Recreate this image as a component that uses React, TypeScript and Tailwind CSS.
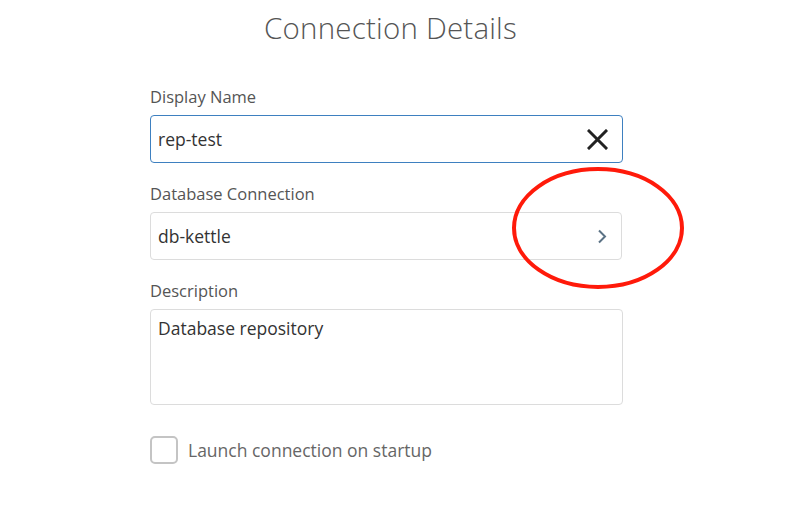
import React, {useState} from "react";

const font = {fontFamily: '"Open Sans", "Noto Sans", sans-serif'};

const App = () => {
    const [name, setName] = useState("rep-test");
    const [launch, setLaunch] = useState(false);

    return (
        <div className="w-[809px] h-[509px] bg-white relative overflow-hidden" style={font}>
            <div className="ml-[150px] w-[473px] pt-[10px] flex flex-col">
                <h1 className="text-center pl-[8px] text-[29.5px] font-light text-[#555] leading-[36px] tracking-[0.2px]">
                    Connection Details
                </h1>

                <label className="mt-[40px] text-[16.5px] text-[#555] leading-[22px]">Display Name</label>
                <div className="mt-[7px] h-[48px] rounded-[4px] border border-[#3e80c0] flex items-center pl-[7px] pr-[13px]">
                    <input
                        className="flex-1 outline-none text-[17.5px] text-[#333] bg-transparent"
                        value={name}
                        onChange={(e) => setName(e.target.value)}
                    />
                    <button className="w-[24px] h-[24px] flex items-center justify-center cursor-pointer" onClick={() => setName("")}>
                        <svg width="21" height="21" viewBox="0 0 21 21">
                            <path d="M2 2 L19 19 M19 2 L2 19" stroke="#222" strokeWidth="3" strokeLinecap="square"/>
                        </svg>
                    </button>
                </div>

                <label className="mt-[20px] text-[16.5px] text-[#555] leading-[22px]">Database Connection</label>
                <div className="mt-[7px] h-[48px] w-[472px] rounded-[4px] border border-[#dcdcdc] flex items-center pl-[7px] pr-[14px] cursor-pointer">
                    <span className="flex-1 text-[17.5px] text-[#333]">db-kettle</span>
                    <svg width="10" height="15" viewBox="0 0 10 15">
                        <path d="M2 1.5 L8 7.5 L2 13.5" fill="none" stroke="#5b7285" strokeWidth="2"/>
                    </svg>
                </div>

                <label className="mt-[20px] text-[16.5px] text-[#555] leading-[22px]">Description</label>
                <textarea
                    className="mt-[7px] h-[96px] rounded-[4px] border border-[#dcdcdc] px-[7px] pt-[6px] text-[17.5px] text-[#333] outline-none resize-none leading-[24px]"
                    defaultValue="Database repository"
                />

                <label className="mt-[31px] flex items-center gap-[10px] cursor-pointer">
                    <input
                        type="checkbox"
                        className="hidden"
                        checked={launch}
                        onChange={(e) => setLaunch(e.target.checked)}
                    />
                    <span className="w-[28px] h-[28px] rounded-[5px] border-2 border-[#c4c4c4] bg-white"/>
                    <span className="text-[17.5px] text-[#666]">Launch connection on startup</span>
                </label>
            </div>

            {/* annotation ring */}
            <svg className="absolute left-[510px] top-[166px] pointer-events-none" width="178" height="126" viewBox="0 0 178 126">
                <ellipse cx="88" cy="62" rx="84" ry="59" fill="none" stroke="#ff1a0a" strokeWidth="4"/>
            </svg>
        </div>
    );
};

export default App;
